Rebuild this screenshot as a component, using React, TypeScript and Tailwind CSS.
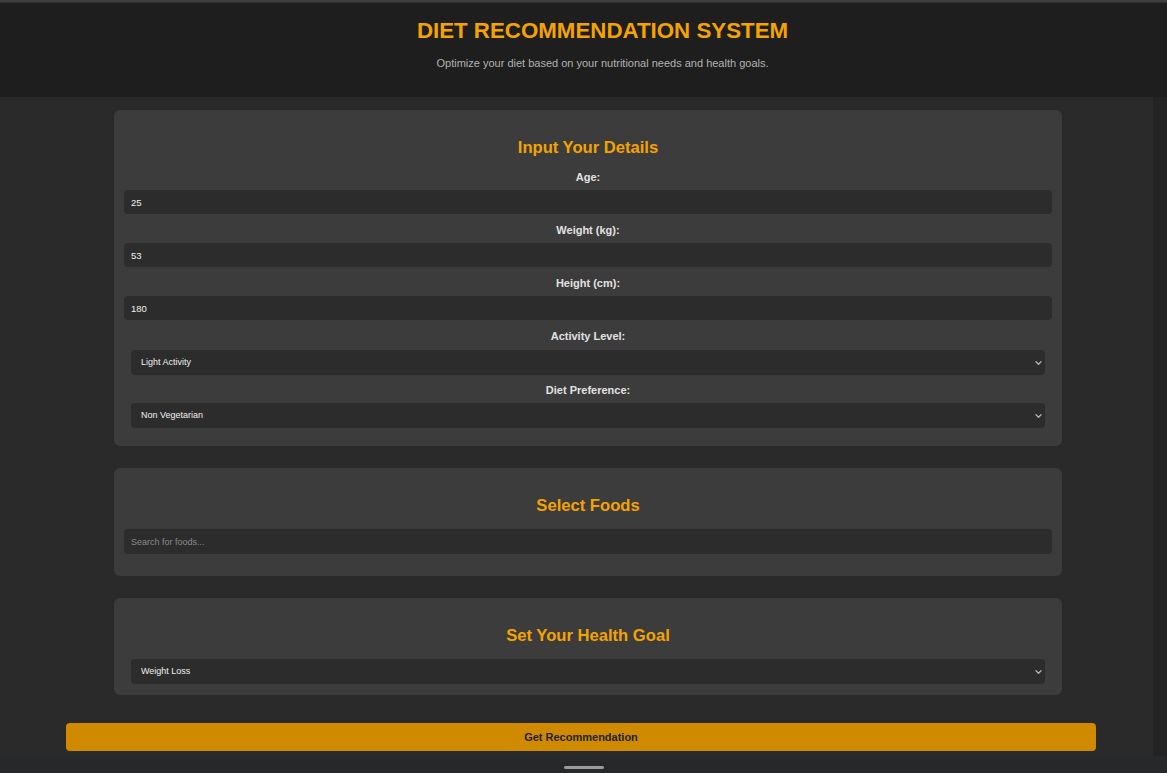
import React from "react";

const font = { fontFamily: '"Liberation Sans", Arial, sans-serif' };

function Chevron() {
  return (
    <svg
      className="pointer-events-none absolute right-[3px] top-1/2 -translate-y-1/2"
      width="7"
      height="5"
      viewBox="0 0 7 5"
      fill="none"
    >
      <path d="M1 1.2 L3.5 3.7 L6 1.2" stroke="#b5b5b5" strokeWidth="1.3" strokeLinecap="round" strokeLinejoin="round" />
    </svg>
  );
}

function Label({ children }: { children: React.ReactNode }) {
  return <div className="text-center text-[11px] font-bold leading-[13px] text-[#e2e2e2]">{children}</div>;
}

function Field({ label, value, top }: { label: string; value: string; top?: boolean }) {
  return (
    <div className={top ? "" : "mt-[10px]"}>
      <Label>{label}</Label>
      <input
        readOnly
        value={value}
        className="mt-[6px] block h-[24px] w-full rounded-[4px] bg-[#2c2c2c] px-[7px] text-[9.5px] text-[#f0f0f0] outline-none"
      />
    </div>
  );
}

function Select({ value }: { value: string }) {
  return (
    <div className="relative mx-[7px]">
      <select
        defaultValue={value}
        className="block h-[25px] w-full appearance-none rounded-[4px] bg-[#2c2c2c] pl-[10px] text-[9px] text-[#f0f0f0] outline-none"
      >
        <option>{value}</option>
      </select>
      <Chevron />
    </div>
  );
}

export default function App() {
  return (
    <div className="flex h-[773px] w-[1167px] flex-col overflow-hidden bg-[#2a2a2a]" style={font}>
      <div className="h-[3px] bg-gradient-to-b from-[#444] to-[#2e2e2e]" />
      <header className="h-[94px] bg-[#1e1e1e] pl-[38px] text-center">
        <h1 className="pt-[15px] text-[22.3px] font-bold leading-[26px] text-[#f4a300]">
          DIET RECOMMENDATION SYSTEM
        </h1>
        <p className="mt-[13px] text-[11px] leading-[13px] text-[#b3b3b3]">
          Optimize your diet based on your nutritional needs and health goals.
        </p>
      </header>
      <div className="flex flex-1">
        <main className="flex-1">
          <section className="ml-[114px] mt-[13px] w-[948px] rounded-[6px] bg-[#3c3c3c] px-[10px] pb-[18px] pt-[28px]">
            <h2 className="text-center text-[16.6px] font-bold leading-[20px] text-[#f4a300]">Input Your Details</h2>
            <div className="mt-[13px]">
              <Field label="Age:" value="25" top />
              <Field label="Weight (kg):" value="53" />
              <Field label="Height (cm):" value="180" />
              <div className="mt-[10px]">
                <Label>Activity Level:</Label>
                <div className="mt-[7px]">
                  <Select value="Light Activity" />
                </div>
              </div>
              <div className="mt-[9px]">
                <Label>Diet Preference:</Label>
                <div className="mt-[6px]">
                  <Select value="Non Vegetarian" />
                </div>
              </div>
            </div>
          </section>

          <section className="ml-[114px] mt-[22px] w-[948px] rounded-[6px] bg-[#3c3c3c] px-[10px] pb-[22px] pt-[28px]">
            <h2 className="text-center text-[16.6px] font-bold leading-[20px] text-[#f4a300]">Select Foods</h2>
            <input
              placeholder="Search for foods..."
              className="mt-[13px] block h-[25px] w-full rounded-[4px] bg-[#2c2c2c] px-[7px] text-[9px] text-[#f0f0f0] outline-none placeholder:text-[#8a8a8a]"
            />
          </section>

          <section className="ml-[114px] mt-[22px] w-[948px] rounded-[6px] bg-[#3c3c3c] px-[10px] pb-[11px] pt-[28px]">
            <h2 className="text-center text-[16.6px] font-bold leading-[20px] text-[#f4a300]">Set Your Health Goal</h2>
            <div className="mt-[13px]">
              <Select value="Weight Loss" />
            </div>
          </section>

          <button className="ml-[66px] mt-[28px] block h-[28px] w-[1030px] rounded-[4px] bg-[#d08a00] text-[11px] font-bold text-[#222]">
            Get Recommendation
          </button>
        </main>
        <div className="w-[14px] bg-[#232323]" />
      </div>
      <div className="flex h-[17px] items-end justify-center bg-[#27282a] pb-[4px]">
        <div className="h-[3px] w-[40px] rounded-full bg-[#9a9a9a]" />
      </div>
    </div>
  );
}
